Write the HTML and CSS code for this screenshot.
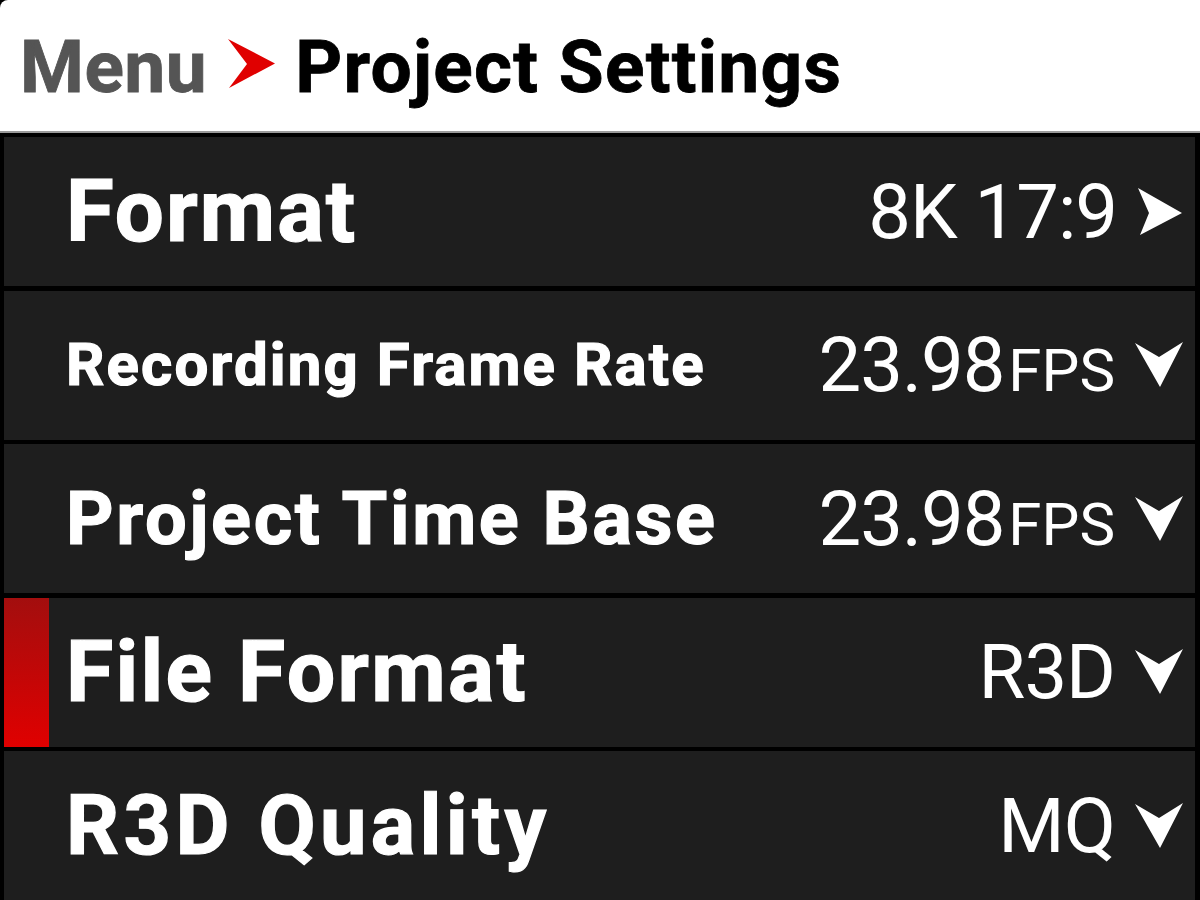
FILE: index.html
```html
<!DOCTYPE html>
<html>
<head>
<meta charset="utf-8">
<link rel="stylesheet" href="styles.css">
</head>
<body>
<div class="screen">
  <header class="crumbs">
    <span class="crumb-parent">Menu</span>
    <svg class="crumb-sep" width="48" height="50" viewBox="0 0 48 50"><path d="M0 0 L47 24.5 L1 49 L19 25 Z" fill="#e00000"/></svg>
    <span class="crumb-current">Project Settings</span>
  </header>
  <main class="list">
    <div class="row">
      <span class="mark"></span>
      <span class="label l-format">Format</span>
      <span class="value"><span class="num">8K 17:9</span>
        <svg class="ico" width="46" height="50" viewBox="0 0 46 50"><path d="M1 1 L45 26 L3 48 L12 26 Z" fill="#fff"/></svg></span>
    </div>
    <div class="row">
      <span class="mark"></span>
      <span class="label l-rec">Recording Frame Rate</span>
      <span class="value"><span class="num">23.98</span><span class="unit">FPS</span>
        <svg class="ico" width="48" height="46" viewBox="0 0 48 46"><path d="M0 1 L24 15 L48 0 L25 45 Z" fill="#fff"/></svg></span>
    </div>
    <div class="row">
      <span class="mark"></span>
      <span class="label l-base">Project Time Base</span>
      <span class="value"><span class="num">23.98</span><span class="unit">FPS</span>
        <svg class="ico" width="48" height="46" viewBox="0 0 48 46"><path d="M0 1 L24 15 L48 0 L25 45 Z" fill="#fff"/></svg></span>
    </div>
    <div class="row">
      <span class="mark active"></span>
      <span class="label l-file">File Format</span>
      <span class="value"><span class="num">R3D</span>
        <svg class="ico" width="48" height="46" viewBox="0 0 48 46"><path d="M0 1 L24 15 L48 0 L25 45 Z" fill="#fff"/></svg></span>
    </div>
    <div class="row">
      <span class="mark"></span>
      <span class="label l-qual">R3D Quality</span>
      <span class="value"><span class="num">MQ</span>
        <svg class="ico" width="48" height="46" viewBox="0 0 48 46"><path d="M0 1 L24 15 L48 0 L25 45 Z" fill="#fff"/></svg></span>
    </div>
  </main>
</div>
</body>
</html>
```
FILE: styles.css
```css
html, body {
  margin: 0;
  padding: 0;
  background: #000;
}
body {
  width: 1200px;
  height: 900px;
  overflow: hidden;
  font-family: Roboto, "Liberation Sans", sans-serif;
}
.screen {
  display: flex;
  flex-direction: column;
  height: 900px;
}
.crumbs {
  height: 130px;
  padding-top: 3px;
  background: #fff;
  border-bottom: 2px solid #9a9a9a;
  border-top-left-radius: 8px;
  display: flex;
  align-items: center;
  padding-left: 20px;
  box-sizing: content-box;
}
.crumb-parent {
  font-size: 73px;
  font-weight: 700;
  color: #555;
  line-height: 1;
  letter-spacing: 0.5px;
  -webkit-text-stroke: 0.8px #555;
}
.crumb-sep {
  margin: 0 19px 0 21px;
  position: relative;
  top: -3px;
}
.crumb-current {
  font-size: 73px;
  font-weight: 700;
  color: #000;
  line-height: 1;
  letter-spacing: 1.3px;
  -webkit-text-stroke: 0.8px #000;
}
.list {
  display: flex;
  flex-direction: column;
  gap: 4.5px;
  padding: 4px 5px 0 4px;
}
.row {
  height: 149px;
  flex: none;
  background: #1e1e1e;
  display: flex;
  align-items: center;
  padding-right: 12px;
}
.mark {
  width: 45px;
  align-self: stretch;
  flex: none;
}
.mark.active {
  background: linear-gradient(to bottom, #a30e0e, #e00000);
}
.label {
  margin-left: 17px;
  color: #fff;
  font-weight: 700;
  line-height: 1;
  white-space: nowrap;
  -webkit-text-stroke: 1.2px #fff;
}
.l-format { font-size: 87px; letter-spacing: 2px; }
.l-rec { font-size: 60px; letter-spacing: 2.1px; }
.l-base { font-size: 74px; letter-spacing: 2.6px; }
.l-file { font-size: 86px; letter-spacing: 2.3px; }
.l-qual { font-size: 83px; letter-spacing: 4.3px; }
.value {
  margin-left: auto;
  display: flex;
  align-items: baseline;
  color: #fff;
  line-height: 1;
}
.num {
  font-size: 76px;
  font-weight: 400;
  letter-spacing: -1px;
}
.unit {
  font-size: 60px;
  font-weight: 400;
  margin-left: 4px;
}
.ico {
  margin-left: 20px;
  align-self: center;
}
```
